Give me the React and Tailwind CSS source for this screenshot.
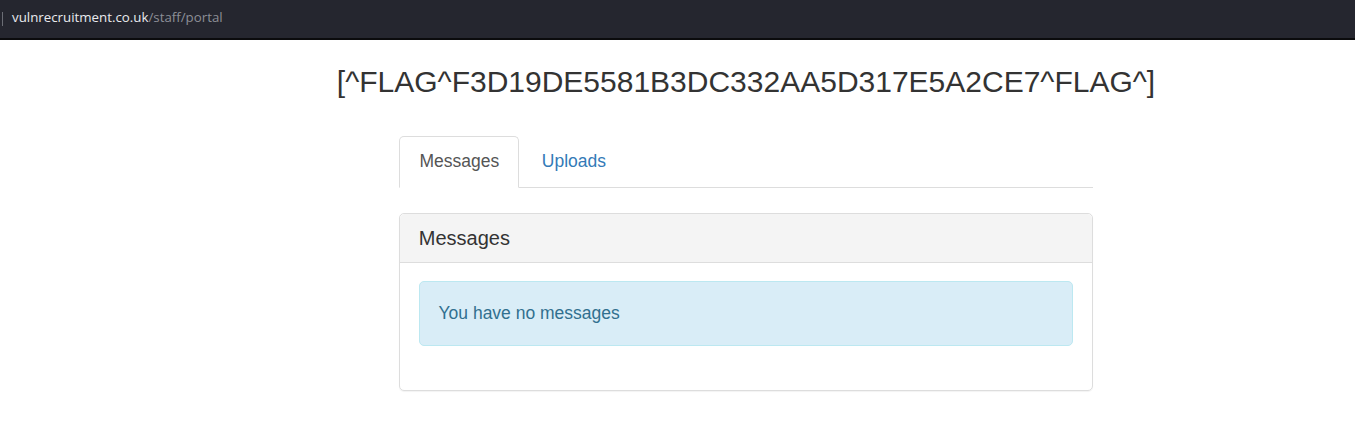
export default function App() {
  return (
    <div className="min-h-[424px] bg-white" style={{ fontFamily: '"Liberation Sans", Arial, sans-serif' }}>
      <div className="h-[40px] bg-[#25262f] border-b-[2px] border-[#0b0b0d] flex items-center">
        <div className="w-px h-[14px] bg-[#6b6d75] ml-[2px] mr-[9px]" />
        <div className="text-[13.3px] leading-none -mt-[3px]" style={{ fontFamily: '"Open Sans", "Noto Sans", sans-serif' }}>
          <span className="text-[#e9eaee]">vulnrecruitment.co.uk</span>
          <span className="text-[#8c8e96]">/staff/portal</span>
        </div>
      </div>
      <div className="ml-[399px] w-[694px]">
        <div className="mt-[25px] flex justify-center">
          <h2 className="shrink-0 text-[30px] leading-[33px] text-[#333] whitespace-nowrap">
            [^FLAG^F3D19DE5581B3DC332AA5D317E5A2CE7^FLAG^]
          </h2>
        </div>
        <div className="mt-[38px] flex border-b border-[#ddd] text-[17.5px] leading-[25px]">
          <div className="-mb-px pl-[19.5px] pr-[19px] pt-[12px] pb-[13px] border border-[#ddd] border-b-white bg-white rounded-t-[5px] text-[#555]">
            Messages
          </div>
          <div className="ml-[2.5px] px-[19px] pt-[12px] pb-[12px] border border-transparent text-[#337ab7]">
            Uploads
          </div>
        </div>
        <div className="mt-[25px] border border-[#ddd] rounded-[5px] shadow-[0_1px_1px_rgba(0,0,0,0.05)]">
          <div className="bg-[#f4f4f4] border-b border-[#ddd] rounded-t-[5px] px-[18.75px] pt-[12.5px] pb-[13px] text-[20px] leading-[22px] text-[#333]">
            Messages
          </div>
          <div className="px-[18.75px] pt-[18.5px] pb-[18.75px]">
            <div className="mb-[25.5px] bg-[#d9edf7] border border-[#bce8f1] rounded-[5px] p-[18.75px] text-[17.5px] leading-[25px] text-[#31708f]">
              You have no messages
            </div>
          </div>
        </div>
      </div>
    </div>
  );
}
